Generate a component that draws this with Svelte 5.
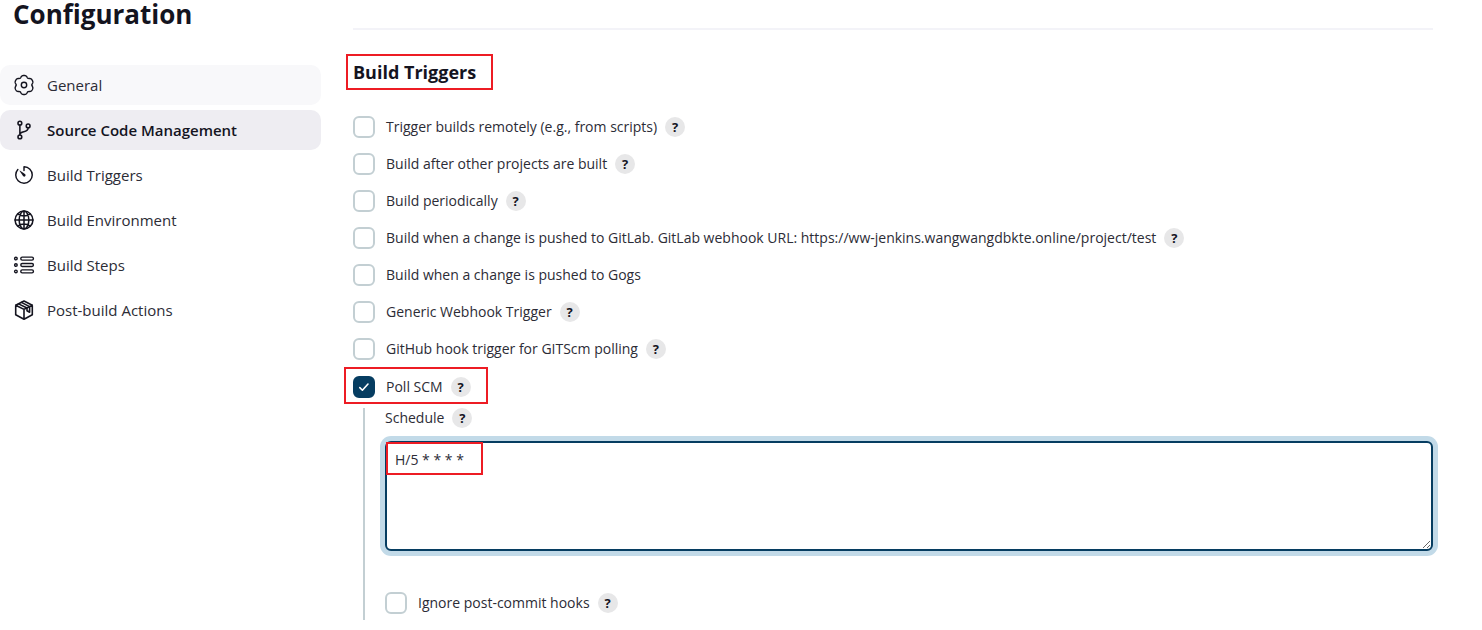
<script>
  const sections = [
    { label: 'General', icon: 'gear', state: 'hover' },
    { label: 'Source Code Management', icon: 'branch', state: 'active' },
    { label: 'Build Triggers', icon: 'timer', state: '' },
    { label: 'Build Environment', icon: 'globe', state: '' },
    { label: 'Build Steps', icon: 'list', state: '' },
    { label: 'Post-build Actions', icon: 'cube', state: '' }
  ];

  let triggers = $state([
    { id: 'remote', label: 'Trigger builds remotely (e.g., from scripts)', help: true, on: false },
    { id: 'after', label: 'Build after other projects are built', help: true, on: false },
    { id: 'periodic', label: 'Build periodically', help: true, on: false },
    {
      id: 'gitlab',
      label:
        'Build when a change is pushed to GitLab. GitLab webhook URL: https://ww-jenkins.wangwangdbkte.online/project/test',
      help: true,
      on: false
    },
    { id: 'gogs', label: 'Build when a change is pushed to Gogs', help: false, on: false },
    { id: 'generic', label: 'Generic Webhook Trigger', help: true, on: false },
    { id: 'github', label: 'GitHub hook trigger for GITScm polling', help: true, on: false }
  ]);
  let poll = $state(true);
  let ignoreHooks = $state(false);
  let schedule = $state('H/5 * * * *');

  // Six broad lobes with narrow notches between them, centred in the 22px icon box.
  const gear =
    Array.from({ length: 144 }, (_, i) => {
      const a = (i * Math.PI) / 72;
      const notch = ((1 + Math.cos(6 * a)) / 2) ** 2;
      const r = 9.5 - 1.7 * notch;
      return `${i ? 'L' : 'M'}${(11 + r * Math.cos(a)).toFixed(2)} ${(11 + r * Math.sin(a)).toFixed(2)}`;
    }).join('') + 'Z';
</script>

{#snippet check(id, label, help, get, set)}
  <div class="row">
    <input type="checkbox" {id} bind:checked={get, set} />
    <label for={id}>{label}</label>
    {#if help}
      <button class="help" type="button" aria-label="Help for {label}">?</button>
    {/if}
  </div>
{/snippet}

<div class="page">
  <aside>
    <h1>Configuration</h1>
    <nav>
      {#each sections as s}
        <a href="#{s.icon}" class={s.state}>
          {#if s.icon === 'gear'}
            <svg viewBox="0 0 22 22" stroke-width="1.4">
              <path d={gear} />
              <circle cx="11" cy="11" r="2.7" />
            </svg>
          {:else if s.icon === 'branch'}
            <svg viewBox="0 0 512 512" stroke-width="36">
              <circle cx="160" cy="96" r="44" />
              <circle cx="160" cy="416" r="44" />
              <circle cx="352" cy="160" r="44" />
              <path d="M160 368V144M352 208c0 128-192 48-192 160" />
            </svg>
          {:else if s.icon === 'timer'}
            <svg viewBox="0 0 512 512" stroke-width="34">
              <path
                d="M112.91 128A191.85 191.85 0 0064 254c-1.18 106.35 85.65 193.8 192 194 106.2.2 192-85.83 192-192 0-104.54-83.55-189.61-187.5-192a4.36 4.36 0 00-4.5 4.37V152"
              />
              <path
                class="solid"
                d="M233.38 278.63l-79-113a8.13 8.13 0 0111.32-11.32l113 79a32.5 32.5 0 01-37.25 53.26 33.21 33.21 0 01-8.07-7.94z"
              />
            </svg>
          {:else if s.icon === 'globe'}
            <svg viewBox="0 0 512 512" stroke-width="36">
              <circle cx="256" cy="256" r="208" />
              <path
                d="M256 48c-58.07 0-112.67 93.13-112.67 208S197.93 464 256 464s112.67-93.13 112.67-208S314.07 48 256 48zM117.33 117.33c38.24 27.15 86.38 43.34 138.67 43.34s100.43-16.19 138.67-43.34M394.67 394.67c-38.24-27.15-86.38-43.34-138.67-43.34s-100.43 16.19-138.67 43.34M256 48v416M464 256H48"
              />
            </svg>
          {:else if s.icon === 'list'}
            <svg viewBox="0 0 22 22" stroke-width="1.4">
              {#each [4.6, 11, 17.4] as y}
                <circle cx="2.9" cy={y} r="1.3" />
                <rect x="7.8" y={y - 1.5} width="12.6" height="3" rx="1.4" />
              {/each}
            </svg>
          {:else}
            <svg viewBox="0 0 22 22" stroke-width="1.6">
              <path d="M11 2l8.3 4.2v9.6L11 20.2l-8.3-4.4V6.2zM2.7 6.2L11 10.4l8.3-4.2M11 10.4v9.8" />
              <path d="M8.4 3.4l8.2 4.2v5.6L14 11.7V9L5.500 4.900" />
            </svg>
          {/if}
          <span>{s.label}</span>
        </a>
      {/each}
    </nav>
  </aside>

  <main>
    <hr />
    <h2>Build Triggers<span class="mark mark-title"></span></h2>

    <div class="rows">
      {#each triggers as t}
        {@render check(t.id, t.label, t.help, () => t.on, (v) => (t.on = v))}
      {/each}
    </div>

    <div class="poll">
      {@render check('poll', 'Poll SCM', true, () => poll, (v) => (poll = v))}
      <span class="mark mark-poll"></span>
    </div>

    <div class="nested">
      <div class="caption">
        <label for="schedule">Schedule</label>
        <button class="help" type="button" aria-label="Help for Schedule">?</button>
      </div>
      <div class="field">
        <textarea id="schedule" spellcheck="false" bind:value={schedule}></textarea>
        <span class="mark mark-field"></span>
      </div>
      {@render check('ignore', 'Ignore post-commit hooks', true, () => ignoreHooks, (v) => (ignoreHooks = v))}
    </div>
  </main>
</div>

<style>
  :global(body) {
    background: #fff;
  }
  .page {
    display: flex;
    gap: 32px;
    padding-right: 49px;
    font-family: 'Open Sans', 'Noto Sans', sans-serif;
    font-size: 14px;
    line-height: 22px;
    color: #2c2c36;
  }
  aside {
    flex: 0 0 321px;
  }
  h1,
  h2 {
    color: #14141f;
    font-weight: 700;
  }
  h1 {
    margin: 0 0 37px 13px;
    font-size: 26px;
    line-height: 28px;
  }
  nav {
    display: flex;
    flex-direction: column;
    gap: 5px;
  }
  nav a {
    display: flex;
    align-items: center;
    gap: 12px;
    height: 40px;
    padding-left: 13px;
    border-radius: 10px;
    color: inherit;
    text-decoration: none;
    font-size: 15px;
  }
  nav a.hover {
    background: #f8f8fa;
  }
  nav a.active {
    background: #eeedf2;
    color: #14141f;
    font-weight: 600;
  }
  svg {
    width: 22px;
    height: 22px;
    flex: none;
    fill: none;
    stroke: #14141f;
    stroke-linecap: round;
    stroke-linejoin: round;
  }
  .solid {
    fill: #14141f;
    stroke: none;
  }
  main {
    flex: 1;
    min-width: 0;
    padding-top: 28px;
  }
  hr {
    height: 2px;
    margin: 0;
    border: 0;
    background: #f3f3f8;
  }
  h2 {
    position: relative;
    margin: 30px 0 32px;
    font-size: 18px;
    line-height: 24px;
  }
  .rows {
    display: flex;
    flex-direction: column;
    gap: 15px;
  }
  .row,
  .caption {
    display: flex;
    align-items: center;
  }
  .row input {
    appearance: none;
    flex: none;
    width: 22px;
    height: 22px;
    margin: 0 11px 0 0;
    border: 2px solid #c3cfd3;
    border-radius: 6px;
    background: #fff;
  }
  .row input:checked {
    border-color: #063d61;
    background: #063d61
      url("data:image/svg+xml,%3Csvg xmlns='http://www.w3.org/2000/svg' viewBox='0 0 18 18' fill='none' stroke='white' stroke-width='1.6' stroke-linecap='round' stroke-linejoin='round'%3E%3Cpath d='M4.8 9.6l2.6 2.6 5.6-6.2'/%3E%3C/svg%3E");
  }
  .help {
    flex: none;
    width: 20px;
    height: 20px;
    margin: 0 0 0 8px;
    padding: 0;
    border: 0;
    border-radius: 50%;
    background: #e7e7e8;
    color: #14141f;
    font: 700 13px/20px 'Open Sans', sans-serif;
  }
  .poll {
    position: relative;
    margin-top: 16px;
  }
  .nested {
    margin: 10px 0 0 10px;
    padding: 0 0 6px 20px;
    border-left: 2px solid #c3cfd3;
  }
  .caption {
    height: 20px;
    margin-bottom: 13px;
  }
  .field {
    position: relative;
    margin-bottom: 41px;
  }
  textarea {
    display: block;
    box-sizing: border-box;
    width: 100%;
    height: 110px;
    padding: 6px 8px;
    border: 2px solid #063d61;
    border-radius: 6px;
    outline: 0;
    box-shadow: 0 0 0 5px #c2dae8;
    background: #fff;
    color: inherit;
    font: inherit;
    resize: vertical;
  }
  .mark {
    position: absolute;
    box-sizing: border-box;
    border: 2px solid #ed1c24;
    pointer-events: none;
  }
  .mark-title {
    left: -7px;
    top: -6px;
    width: 147px;
    height: 36px;
  }
  .mark-poll {
    left: -9px;
    top: -9px;
    width: 144px;
    height: 37px;
  }
  .mark-field {
    left: 1px;
    top: 1px;
    width: 97px;
    height: 33px;
  }
</style>
